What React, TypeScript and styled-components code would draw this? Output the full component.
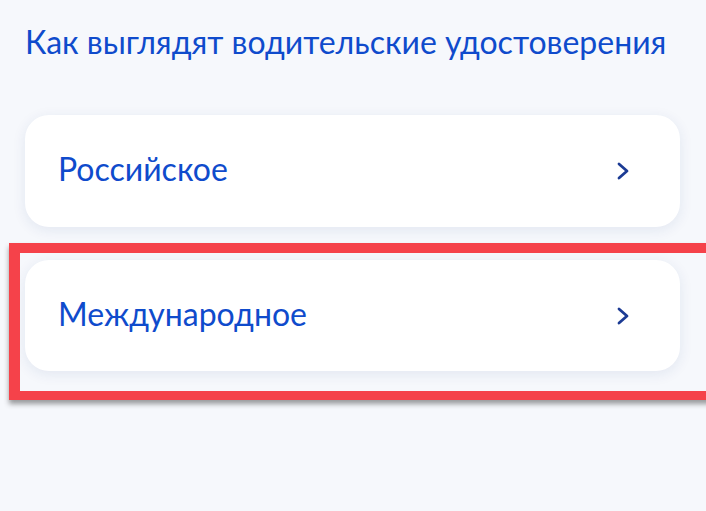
import styled, { createGlobalStyle } from "styled-components";

const GlobalStyle = createGlobalStyle`
  html, body {
    margin: 0;
    padding: 0;
    background: #f6f8fc;
  }
  body {
    font-family: Lato, "Noto Sans", sans-serif;
    overflow: hidden;
  }
`;

const Page = styled.div`
  width: 706px;
  height: 511px;
  box-sizing: border-box;
  padding: 24px 26px 0 25px;
  display: flex;
  flex-direction: column;
`;

const Title = styled.h2`
  margin: 0 0 55px;
  font-size: 32px;
  line-height: 36px;
  font-weight: 400;
  color: #0f4bcc;
  white-space: nowrap;
`;

const List = styled.div`
  display: flex;
  flex-direction: column;
  gap: 33px;
`;

const Highlight = styled.div`
  position: relative;
`;

const Frame = styled.div`
  position: absolute;
  left: -16px;
  top: -17px;
  right: -40px;
  bottom: -29px;
  border: 11px solid #f5424a;
  border-top-width: 10px;
  border-bottom-width: 9px;
  box-shadow: 0 4px 5px rgba(40, 40, 40, 0.45);
  pointer-events: none;
`;

const Card = styled.a<{ $height: number }>`
  display: flex;
  align-items: center;
  justify-content: space-between;
  height: ${(p) => p.$height}px;
  padding: 0 50px 0 33px;
  background: #ffffff;
  border-radius: 24px;
  box-shadow: 0 3px 14px rgba(20, 50, 120, 0.09);
  text-decoration: none;
  cursor: pointer;
`;

const CardText = styled.span`
  font-size: 32px;
  color: #0f4bcc;
  margin-bottom: 5px;
`;

const Chevron = () => (
  <svg width="14" height="20" viewBox="0 0 14 20" fill="none">
    <polyline
      points="3,3 11,10 3,17"
      stroke="#1c3b94"
      strokeWidth="2.8"
      strokeLinecap="round"
      strokeLinejoin="round"
    />
  </svg>
);

const items = [
  { label: "Российское", height: 112, marked: false },
  { label: "Международное", height: 111, marked: true },
];

export default function App() {
  return (
    <>
      <GlobalStyle />
      <Page>
        <Title>Как выглядят водительские удостоверения</Title>
        <List>
          {items.map((item) => {
            const card = (
              <Card $height={item.height} key={item.label}>
                <CardText>{item.label}</CardText>
                <Chevron />
              </Card>
            );
            return item.marked ? (
              <Highlight key={item.label}>
                {card}
                <Frame />
              </Highlight>
            ) : (
              card
            );
          })}
        </List>
      </Page>
    </>
  );
}
